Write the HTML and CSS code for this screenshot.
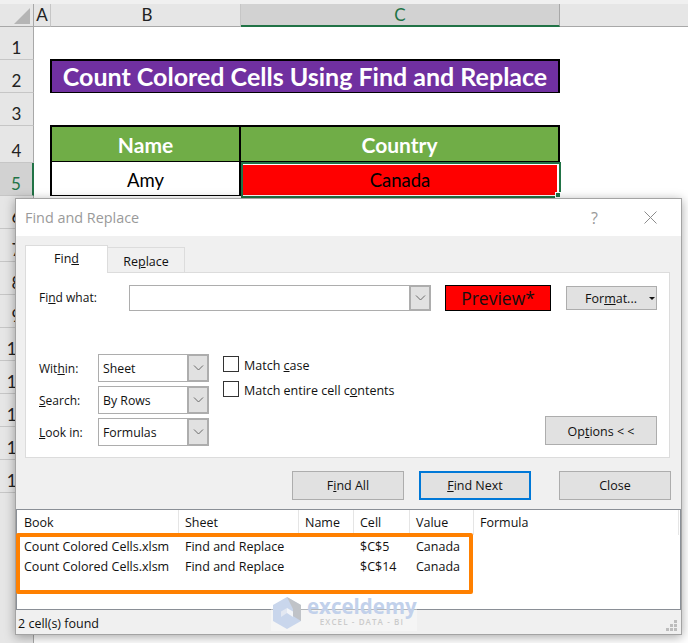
FILE: index.html
```html
<!DOCTYPE html>
<html lang="en">
<head>
<meta charset="utf-8">
<title>Find and Replace</title>
<link rel="stylesheet" href="styles.css">
</head>
<body>
<div class="sheet">
  <div class="topstrip"></div>

  <div class="corner"><span class="corner-mark"></span></div>
  <div class="colhead">A</div>
  <div class="colhead colhead-b">B</div>
  <div class="colhead colhead-on">C</div>
  <div class="colhead colhead-rest"></div>

  <div class="rowhead">1</div><div class="blank span4"></div>

  <div class="rowhead">2</div><div class="blank"></div>
  <div class="title-cell">Count Colored Cells Using Find and Replace</div>
  <div class="blank"></div>

  <div class="rowhead">3</div><div class="blank span4"></div>

  <div class="rowhead">4</div><div class="blank"></div>
  <div class="head-cell head-b">Name</div>
  <div class="head-cell head-c">Country</div>
  <div class="blank"></div>

  <div class="rowhead rowhead-on">5</div><div class="blank"></div>
  <div class="data-cell">Amy</div>
  <div class="data-cell data-sel"><span class="sel-fill">Canada</span><span class="sel-handle"></span></div>
  <div class="blank"></div>

  <div class="rowhead">6</div><div class="blank span4"></div>
  <div class="rowhead">7</div><div class="blank span4"></div>
  <div class="rowhead">8</div><div class="blank span4"></div>
  <div class="rowhead">9</div><div class="blank span4"></div>
  <div class="rowhead">10</div><div class="blank span4"></div>
  <div class="rowhead">11</div><div class="blank span4"></div>
  <div class="rowhead">12</div><div class="blank span4"></div>
  <div class="rowhead">13</div><div class="blank span4"></div>
  <div class="rowhead">14</div><div class="blank span4"></div>
  <div class="rowhead rowhead-tail"></div><div class="blank span4"></div>
</div>

<section class="dialog">
  <header class="titlebar">
    <span class="titlebar-text">Find and Replace</span>
    <span class="help">?</span>
    <svg class="close-x" width="13" height="13" viewBox="0 0 13 13"><path d="M0.5 0.5L12.5 12.5M12.5 0.5L0.5 12.5" fill="none" stroke="#8c8c8c" stroke-width="1"/></svg>
  </header>

  <div class="tabs">
    <div class="tab tab-on">Fin<u>d</u></div>
    <div class="tab">Re<u>p</u>lace</div>
  </div>

  <div class="panel">
    <div class="find-row">
      <label class="find-label">Fi<u>n</u>d what:</label>
      <div class="combo combo-find">
        <span class="combo-value"></span>
        <span class="combo-btn"><svg width="11" height="6" viewBox="0 0 11 6"><path d="M1 0.5L5.5 5L10 0.5" fill="none" stroke="#6a6a6a"/></svg></span>
      </div>
      <div class="preview">Preview*</div>
      <div class="btn btn-format"><span>For<u>m</u>at...</span><span class="caret"></span></div>
    </div>

    <div class="options-row">
      <div class="selects">
        <div class="select-row">
          <label class="select-label">Wit<u>h</u>in:</label>
          <div class="combo combo-small">
            <span class="combo-value">Sheet</span>
            <span class="combo-btn"><svg width="11" height="6" viewBox="0 0 11 6"><path d="M1 0.5L5.5 5L10 0.5" fill="none" stroke="#6a6a6a"/></svg></span>
          </div>
        </div>
        <div class="select-row">
          <label class="select-label"><u>S</u>earch:</label>
          <div class="combo combo-small">
            <span class="combo-value">By Rows</span>
            <span class="combo-btn"><svg width="11" height="6" viewBox="0 0 11 6"><path d="M1 0.5L5.5 5L10 0.5" fill="none" stroke="#6a6a6a"/></svg></span>
          </div>
        </div>
        <div class="select-row">
          <label class="select-label"><u>L</u>ook in:</label>
          <div class="combo combo-small">
            <span class="combo-value">Formulas</span>
            <span class="combo-btn"><svg width="11" height="6" viewBox="0 0 11 6"><path d="M1 0.5L5.5 5L10 0.5" fill="none" stroke="#6a6a6a"/></svg></span>
          </div>
        </div>
      </div>
      <div class="checks">
        <div class="check-row"><span class="checkbox"></span><span>Match <u>c</u>ase</span></div>
        <div class="check-row"><span class="checkbox"></span><span>Match entire cell c<u>o</u>ntents</span></div>
      </div>
      <div class="btn btn-options">Op<u>t</u>ions &lt; &lt;</div>
    </div>
  </div>

  <div class="actions">
    <div class="btn btn-action">F<u>i</u>nd All</div>
    <div class="btn btn-action btn-default"><u>F</u>ind Next</div>
    <div class="btn btn-action btn-close">Close</div>
  </div>

  <div class="results">
    <div class="res-row res-head">
      <div class="res-cell">Book</div>
      <div class="res-cell">Sheet</div>
      <div class="res-cell">Name</div>
      <div class="res-cell">Cell</div>
      <div class="res-cell">Value</div>
      <div class="res-cell">Formula</div>
      <div class="res-cell"></div>
    </div>
    <div class="res-row">
      <div class="res-cell">Count Colored Cells.xlsm</div>
      <div class="res-cell">Find and Replace</div>
      <div class="res-cell"></div>
      <div class="res-cell">$C$5</div>
      <div class="res-cell">Canada</div>
    </div>
    <div class="res-row">
      <div class="res-cell">Count Colored Cells.xlsm</div>
      <div class="res-cell">Find and Replace</div>
      <div class="res-cell"></div>
      <div class="res-cell">$C$14</div>
      <div class="res-cell">Canada</div>
    </div>
    <div class="highlight"></div>
  </div>

  <footer class="status">
    <span>2 cell(s) found</span>
    <svg class="grip" width="12" height="12" viewBox="0 0 12 12"><path d="M8 0h3v3H8zM4 4h3v3H4zM8 4h3v3H8zM0 8h3v3H0zM4 8h3v3H4zM8 8h3v3H8z" fill="#bdbdbd"/></svg>
  </footer>

  <div class="watermark">
    <svg class="wm-icon" width="28" height="32" viewBox="0 0 28 32">
      <path d="M14 0L28 8V24L14 32L0 24V8Z" fill="#c9d6ec"/>
      <path d="M14 0L28 8V24L20 19V12Z" fill="#bcbcbc" opacity=".75"/>
      <path d="M14 11L20 14.5V20L14 16Z" fill="#f3f5f9"/>
      <path d="M8 14.5L14 11V16L8 20Z" fill="#e3e8f2"/>
    </svg>
    <div class="wm-text">
      <span class="wm-name">exceldemy</span>
      <span class="wm-sub">EXCEL - DATA - BI</span>
    </div>
  </div>
</section>
</body>
</html>
```

FILE: styles.css
```css
* { box-sizing: border-box; }

html, body {
  margin: 0;
  padding: 0;
  width: 688px;
  height: 643px;
  overflow: hidden;
  background: #fff;
}

body {
  position: relative;
  font-family: "Open Sans", "Liberation Sans", sans-serif;
  font-size: 12px;
  color: #111;
}

/* Spreadsheet behind the dialog */
.sheet {
  display: grid;
  grid-template-columns: 34px 17px 190px 319px 1fr;
  grid-template-rows: 4px 23px 33px 33px 33px 37px 33px repeat(9, 33px) 150px;
  font-family: Lato, "Liberation Sans", sans-serif;
  height: 643px;
  overflow: hidden;
}

.topstrip {
  grid-column: 1 / -1;
  background: #f0f0f0;
}

.corner {
  background: #e6e6e6;
  border-right: 1px solid #a8a8a8;
  border-bottom: 1px solid #a8a8a8;
  position: relative;
}

.corner-mark {
  position: absolute;
  left: 14px;
  top: 4px;
  width: 16px;
  height: 16px;
  background: #b5b5b5;
  clip-path: polygon(100% 0, 100% 100%, 0 100%);
}

.colhead {
  background: #e6e6e6;
  border-right: 1px solid #c6c6c6;
  border-bottom: 1px solid #a8a8a8;
  font-size: 17px;
  line-height: 22px;
  text-align: center;
  color: #222;
}

.colhead-b { padding-left: 3px; }

.colhead-on {
  background: #d2d2d2;
  color: #217346;
  border-right-color: #a8a8a8;
  border-bottom: 2px solid #217346;
}

.colhead-rest { border-right: 0; }

.rowhead {
  background: #e6e6e6;
  border-right: 1px solid #a8a8a8;
  border-bottom: 1px solid #c6c6c6;
  font-size: 17px;
  color: #222;
  display: flex;
  align-items: flex-end;
  justify-content: center;
  line-height: 22px;
}

.rowhead-on {
  background: #d2d2d2;
  color: #217346;
  border-right: 2px solid #217346;
}

.rowhead-tail { border-bottom: 0; }

.blank { background: #fff; }
.span4 { grid-column: span 4; }

.title-cell {
  grid-column: span 2;
  margin: -1px 0 -1px -1px;
  background: #7030a0;
  border: 2px solid #000;
  color: #fff;
  font-weight: 700;
  font-size: 25px;
  line-height: 31px;
  text-align: center;
  white-space: nowrap;
}

.head-cell {
  margin-top: -1px;
  background: #70ad47;
  border-top: 2px solid #000;
  border-bottom: 2px solid #000;
  color: #fff;
  font-weight: 700;
  font-size: 21px;
  line-height: 36px;
  text-align: center;
}

.head-b {
  margin-left: -1px;
  border-left: 2px solid #000;
  border-right: 2px solid #000;
}

.head-c { border-right: 2px solid #000; }

.data-cell {
  font-size: 18.5px;
  line-height: 37px;
  text-align: center;
  color: #000;
}

.data-cell:not(.data-sel) {
  margin-left: -1px;
  margin-top: -1px;
  margin-bottom: -1px;
  border-left: 2px solid #000;
  border-right: 2px solid #000;
  border-bottom: 2px solid #000;
  background: #fff;
}

.data-sel {
  position: relative;
  margin: -1px -1px -2px 0;
  border: 2px solid #217346;
  background: #fff;
  padding: 1px 2px 1px 0;
}

.sel-fill {
  display: block;
  height: 100%;
  background: #f00;
  line-height: 30px;
}

.sel-handle {
  position: absolute;
  right: -2px;
  bottom: -2px;
  width: 6px;
  height: 6px;
  background: #217346;
  border: 1px solid #fff;
}

/* Find and Replace dialog */
.dialog {
  position: absolute;
  left: 15px;
  top: 198px;
  width: 667px;
  height: 437px;
  display: flex;
  flex-direction: column;
  background: #f0f0f0;
  border: 1px solid #a3a3a3;
  box-shadow: 0 2px 10px rgba(0, 0, 0, .35);
}

.titlebar {
  height: 37px;
  flex: none;
  background: #fff;
  display: flex;
  align-items: center;
  padding-left: 9px;
  font-size: 14.4px;
  color: #9a9a9a;
}

.titlebar-text { flex: 1; }

.help {
  font-size: 16px;
  color: #999;
  margin-right: 46px;
}

.close-x { margin-right: 24px; }

.tabs {
  display: flex;
  align-items: flex-end;
  height: 27px;
  margin: 9px 0 0 9px;
  flex: none;
  position: relative;
  z-index: 1;
  font-size: 12.5px;
}

.tab {
  height: 25px;
  width: 78px;
  margin-left: -1px;
  border: 1px solid #dcdcdc;
  border-bottom: 0;
  text-align: center;
  line-height: 27px;
}

.tab-on {
  height: 28px;
  width: 83px;
  margin: 0 0 -1px 0;
  background: #fff;
  line-height: 26px;
}

.panel {
  height: 186px;
  flex: none;
  margin: 0 11px 0 9px;
  padding-top: 12px;
  background: #fff;
  border: 1px solid #dcdcdc;
}

.find-row {
  display: flex;
  align-items: flex-start;
  height: 26px;
  padding-left: 13px;
}

.find-label {
  width: 90px;
  line-height: 26px;
}

.combo {
  display: flex;
  height: 28px;
  background: #fff;
  border: 1px solid #adadad;
}

.combo-find {
  width: 302px;
  height: 26px;
}

.combo-small { width: 111px; }

.combo-value {
  flex: 1;
  padding-left: 4px;
  font-size: 12.3px;
  line-height: 27px;
}

.combo-btn {
  width: 22px;
  margin: -1px -1px -1px 0;
  display: flex;
  align-items: center;
  justify-content: center;
  background: #e1e1e1;
  border: 2px solid #adadad;
}

.preview {
  width: 106px;
  height: 26px;
  margin-left: 14px;
  background: #f00;
  border: 1px solid #000;
  color: #111;
  font-size: 17.5px;
  line-height: 24px;
  text-align: center;
}

.btn {
  display: flex;
  align-items: center;
  justify-content: center;
  background: #e1e1e1;
  border: 1px solid #adadad;
  font-size: 12.5px;
}

.btn-format {
  width: 91px;
  height: 24px;
  margin: 1px 0 0 15px;
  padding-left: 17px;
}

.caret {
  width: 0;
  height: 0;
  margin-left: 12px;
  border: 3px solid transparent;
  border-top: 3px solid #111;
  border-bottom: 0;
}

.options-row {
  display: flex;
  align-items: flex-start;
  margin-top: 43px;
  padding-left: 13px;
}

.selects {
  display: flex;
  flex-direction: column;
  gap: 4px;
}

.select-row {
  display: flex;
  align-items: center;
}

.select-label { width: 59px; }

.checks {
  display: flex;
  flex-direction: column;
  gap: 9px;
  margin: 2px 0 0 14px;
  font-size: 12.5px;
}

.check-row {
  display: flex;
  align-items: flex-start;
  gap: 5px;
  height: 16px;
  line-height: 20px;
}

.checkbox {
  width: 16px;
  height: 16px;
  flex: none;
  background: #fff;
  border: 1px solid #333;
}

.btn-options {
  width: 112px;
  height: 29px;
  margin: 62px 12px 0 auto;
  padding-top: 1px;
}

.actions {
  display: flex;
  flex: none;
  height: 29px;
  margin: 13px 0 0 276px;
}

.btn-action {
  width: 112px;
  margin-right: 15px;
}

.btn-default { border: 2px solid #0078d7; margin-right: 28px; }
.btn-close { margin-right: 0; }

.results {
  position: relative;
  height: 101px;
  flex: none;
  margin-top: 9px;
  background: #fff;
  border: 1px solid #8a8f96;
  font-size: 12.5px;
}

.res-row {
  display: grid;
  grid-template-columns: 161px 120px 55px 56px 64px 205px 1fr;
  height: 20px;
  line-height: 20px;
}

.res-head {
  height: 23px;
  line-height: 25px;
  margin-bottom: 4px;
}

.res-cell {
  padding-left: 7px;
  white-space: nowrap;
}

.res-head .res-cell + .res-cell {
  padding-left: 6px;
  border-left: 1px solid #e5e5e5;
}

.highlight {
  position: absolute;
  left: -1px;
  top: 23px;
  width: 457px;
  height: 61px;
  border: 4px solid #ff8000;
  border-radius: 2px;
}

.status {
  flex: 1;
  display: flex;
  align-items: center;
  justify-content: space-between;
  padding: 3px 3px 0 2px;
  font-size: 12.5px;
}

.grip { align-self: flex-end; margin-bottom: 2px; }

.watermark {
  position: absolute;
  left: 255px;
  top: 396px;
  display: flex;
  gap: 6px;
  padding: 2px 0 2px 2px;
  background: rgba(255, 255, 255, .35);
}

.wm-text {
  display: flex;
  flex-direction: column;
  align-items: center;
  margin-top: -2px;
}

.wm-name {
  font-family: "Open Sans", sans-serif;
  font-weight: 700;
  font-size: 20.5px;
  line-height: 22px;
  color: #c2d1eb;
}

.wm-sub {
  font-size: 8px;
  line-height: 9px;
  letter-spacing: 1.1px;
  color: #cbcbcb;
  font-weight: 600;
}
```
